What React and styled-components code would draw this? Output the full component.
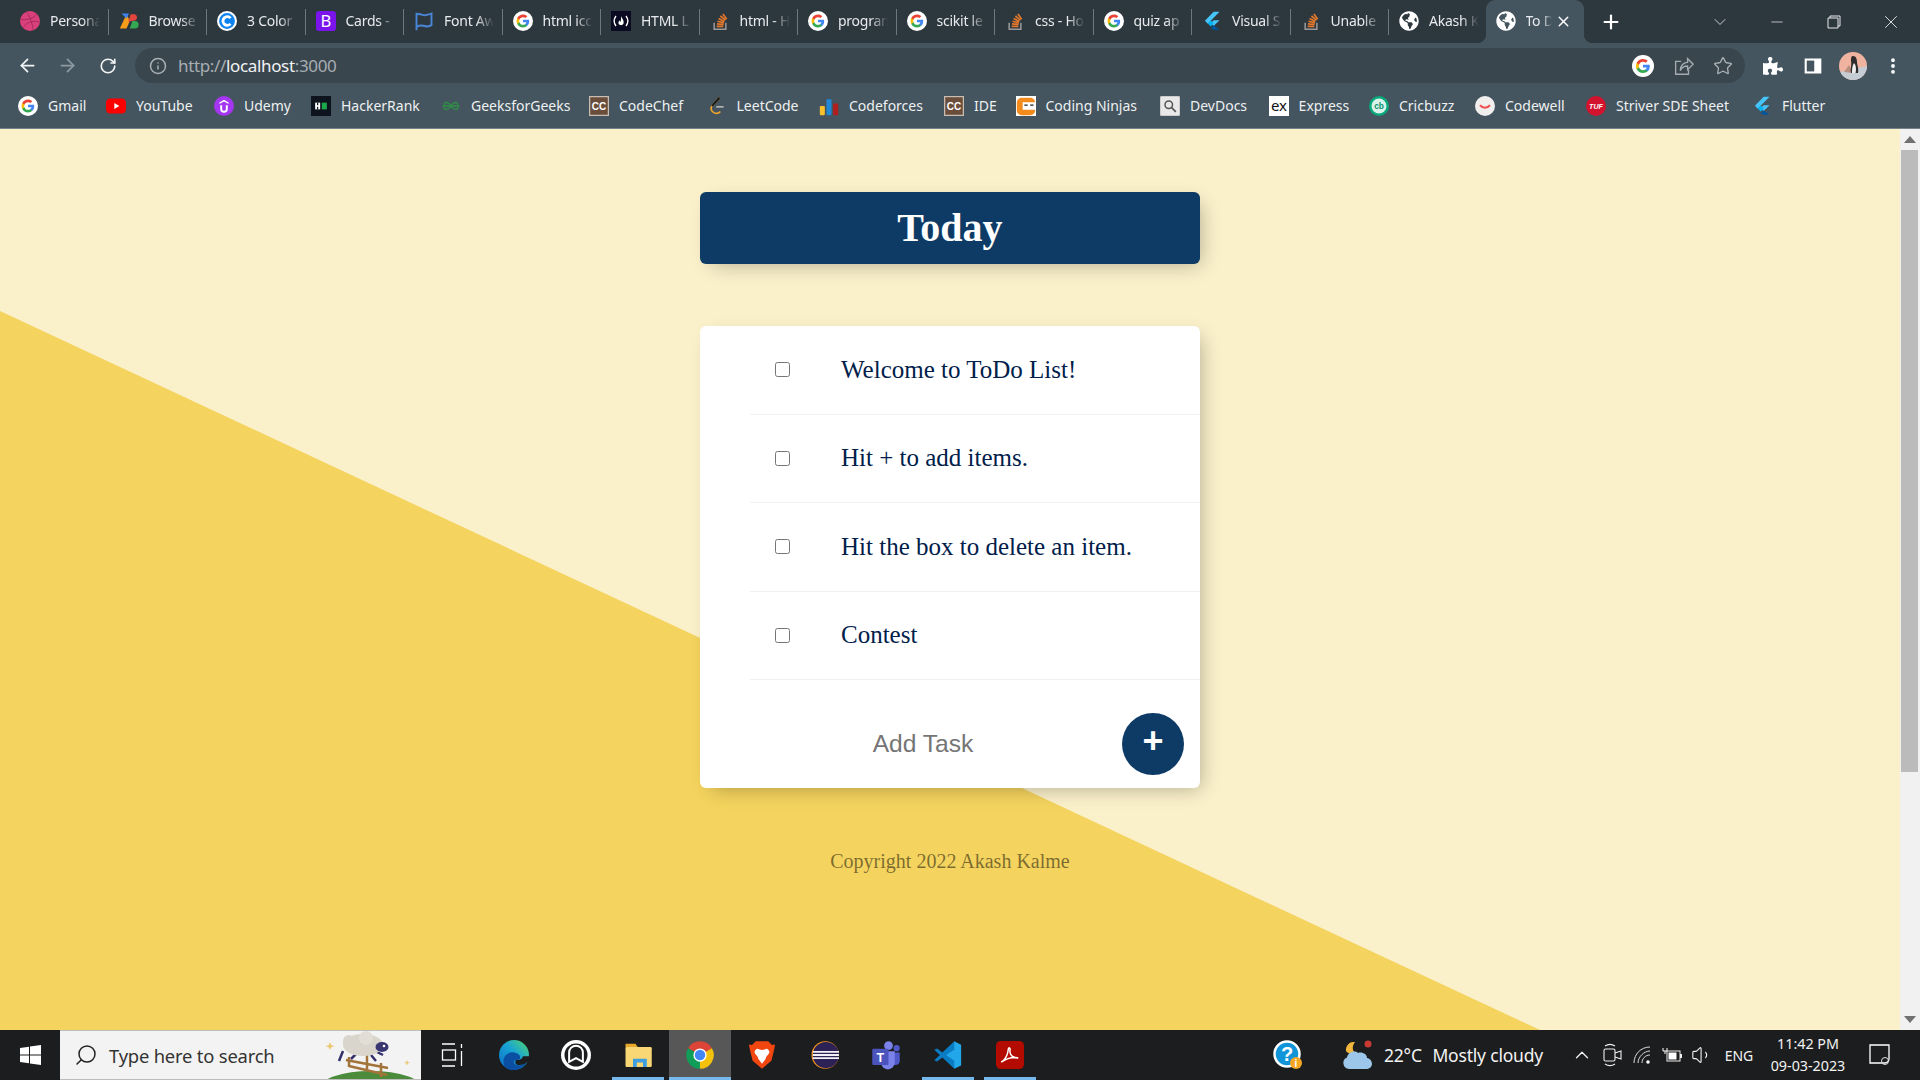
import React from "react";
import styled, { createGlobalStyle } from "styled-components";
import { ArrowLeft, ArrowRight, RotateCw, Info, Star, EllipsisVertical, X, Plus, ChevronDown, Minus, Search, ChevronUp, Volume1 } from "lucide-react";
import { FaPuzzlePiece, FaGlobeAmericas } from "react-icons/fa";

const UI = '"Noto Sans", "Open Sans", sans-serif';

const Global = createGlobalStyle`
  html, body { margin: 0; padding: 0; height: 100%; overflow: hidden; }
  * { box-sizing: border-box; }
  body { font-family: "Liberation Serif", serif; }
`;

const Shell = styled.div`
  width: 1920px; height: 1080px; display: flex; flex-direction: column; overflow: hidden;
`;

/* ---------- tab strip ---------- */
const TabStrip = styled.div`
  height: 43px; flex: none; background: #2d373e; display: flex; align-items: stretch; padding-left: 10px;
  font-family: ${UI}; color: #e8eaed;
`;
const Tab = styled.div`
  position: relative; flex: 0 0 98.5px; display: flex; align-items: center; gap: 10px; padding: 0 0 1px 10px;
  ${p => p.$active && `
    margin-left: -2px;
    background: #44555f; border-radius: 9px 9px 0 0;
    &::before, &::after { content: ""; position: absolute; bottom: 0; width: 9px; height: 9px; }
    &::before { left: -9px; background: radial-gradient(circle at 0 0, transparent 9px, #44555f 9.5px); }
    &::after { right: -9px; background: radial-gradient(circle at 100% 0, transparent 9px, #44555f 9.5px); }
  `}
  ${p => p.$sep && `
    &::after { content: ""; position: absolute; right: 0; top: 9px; height: 26px; width: 1px; background: #6d777d; }
  `}
`;
const TabTitle = styled.span`
  flex: none; width: ${p => p.$w || 50}px; overflow: hidden; white-space: nowrap; font-size: 14px; line-height: 20px; letter-spacing: -0.25px;
  -webkit-mask-image: linear-gradient(to right, #000 65%, transparent 100%);
  mask-image: linear-gradient(to right, #000 65%, transparent 100%);
`;
const TabClose = styled.span`
  position: absolute; right: 12px; top: 13px; display: flex;
`;
const NewTab = styled.div`
  flex: none; margin-left: 16px; width: 22px; display: flex; align-items: center; justify-content: center; color: #fff;
`;
const WindowControls = styled.div`
  margin-left: auto; display: flex; align-items: center; color: #e8eaed;
`;
const WinButton = styled.div`
  width: ${p => p.$w}px; display: flex; justify-content: center; align-items: center; height: 38px;
`;

/* ---------- toolbar ---------- */
const Toolbar = styled.div`
  height: 40px; flex: none; background: #44555f; display: flex; align-items: flex-end; font-family: ${UI};
`;
const NavGroup = styled.div`
  flex: none; width: 135px; height: 35px; display: flex; align-items: center; padding-left: 7px; gap: 0.5px;
`;
const NavButton = styled.div`
  width: 40px; height: 35px; display: flex; align-items: center; justify-content: center;
  color: ${p => (p.$dim ? "#8f9aa0" : "#f2f3f4")};
`;
const Omnibox = styled.div`
  flex: none; width: 1610px; height: 35px; background: #3a464e; border-radius: 18px; display: flex; align-items: center;
  padding-left: 14px; padding-right: 2px;
`;
const UrlIcon = styled.div`
  width: 29px; display: flex; color: #a9b0b5; flex: none;
`;
const Url = styled.div`
  font-size: 17px; color: #a7aeb3; letter-spacing: -0.35px; white-space: nowrap; flex: 1;
  strong { font-weight: 400; color: #f1f3f4; }
`;
const OmniAction = styled.div`
  width: 40px; display: flex; justify-content: center; color: #aab1b5;
`;
const ToolbarRight = styled.div`
  flex: 1; height: 35px; display: flex; align-items: center; padding-left: 8px; color: #fff;
`;
const ToolButton = styled.div`
  width: 40px; display: flex; justify-content: center; align-items: center;
`;

/* ---------- bookmarks ---------- */
const BookmarkBar = styled.div`
  height: 46px; flex: none; background: #44555f; border-bottom: 1px solid #76828a; display: flex; align-items: center;
  padding-left: 18px; font-family: ${UI}; color: #eef0f1; font-size: 14px;
`;
const Bookmark = styled.div`
  flex: 0 0 ${p => p.$w}px; display: flex; align-items: center; gap: 10px; white-space: nowrap;
`;

/* ---------- page ---------- */
const Viewport = styled.div`
  flex: 1; min-height: 0; display: flex;
`;
const Page = styled.main`
  position: relative; flex: 1; background: #faf0ca; overflow: hidden; display: flex; flex-direction: column; align-items: center;
  &::before {
    content: ""; position: absolute; inset: 0; background: #f4d35e;
    clip-path: polygon(0 182px, 1540px 901px, 0 901px);
  }
`;
const Heading = styled.header`
  position: relative; width: 500px; height: 72px; margin-top: 63px; background: #0d3b66; border-radius: 6px;
  box-shadow: 6px 6px 19px -6px rgba(0,0,0,.3); display: flex; align-items: center; justify-content: center;
`;
const Title = styled.h1`
  margin: 0; color: #fff; font-size: 40px; font-weight: 700; line-height: 46px;
`;
const Box = styled.section`
  position: relative; width: 500px; margin-top: 62px; background: #fff; border-radius: 6px;
  box-shadow: 6px 6px 19px -6px rgba(0,0,0,.3);
`;
const Item = styled.div`
  margin-left: 50px; min-height: 88.5px; display: flex; align-items: center; border-bottom: 1px solid #f1f1f1;
`;
const Check = styled.input`
  width: 15px; height: 15px; margin: 0 26px 0 25px; flex: none;
`;
const ItemText = styled.p`
  margin: 0; padding: 25px; font-size: 25px; font-weight: 400; color: #00204a;
`;
const AddForm = styled.form`
  margin-left: 50px; height: 108px; padding: 20px 16px 0 0; display: flex; align-items: center;
`;
const AddInput = styled.input`
  width: 346px; height: 62px; border: none; background: transparent; text-align: center; font-family: "Liberation Sans", Arial, sans-serif;
  font-size: 24.6px; outline: none; padding: 0;
  &::placeholder { color: #757575; opacity: 1; }
`;
const AddButton = styled.button`
  width: 62px; height: 62px; margin-left: 26px; flex: none; border: none; border-radius: 50%; background: #0d3b66; color: #fff;
  font-family: "Liberation Sans", Arial, sans-serif; font-size: 36px; font-weight: 700; padding: 0 0 7px; line-height: 1;
`;
const Footer = styled.footer`
  position: relative; margin-top: 61px; font-size: 20px; line-height: 24px; color: rgba(0,0,0,.5); text-align: center;
`;

const Scrollbar = styled.div`
  flex: 0 0 20px; background: #f1f1f1; display: flex; flex-direction: column; align-items: center; justify-content: space-between;
`;
const ScrollArrow = styled.div`
  height: 21px; flex: none; width: 100%; display: flex; align-items: center; justify-content: center; padding-right: 1px;
`;
const ScrollTrack = styled.div`
  flex: 1; width: 100%;
`;
const ScrollThumb = styled.div`
  height: 622px; background: #bbbbbb; margin-left: 1px; margin-right: 2px;
`;

/* ---------- taskbar ---------- */
const Taskbar = styled.footer`
  height: 50px; flex: none; background: #1c1d1e; display: flex; align-items: center; font-family: ${UI}; color: #f3f3f3;
`;
const StartButton = styled.div`
  flex: 0 0 60px; height: 100%; display: flex; align-items: center; justify-content: center;
`;
const SearchBox = styled.div`
  flex: 0 0 361px; height: 100%; background: #f3f3f3; border-top: 1px solid #bdbdbd; border-bottom: 1px solid #bdbdbd; display: flex; align-items: center;
  padding-left: 14px; color: #333; font-size: 18.4px; overflow: hidden;
`;
const SearchLabel = styled.span`
  margin-left: 11px; white-space: nowrap; letter-spacing: -0.2px;
`;
const Doodle = styled.svg`
  margin-left: auto; flex: none; display: block;
`;
const AppCell = styled.div`
  position: relative; flex: 0 0 62px; height: 100%; display: flex; align-items: center; justify-content: center;
  background: ${p => (p.$focused ? "#575757" : "transparent")};
  ${p => p.$open && `
    &::after { content: ""; position: absolute; bottom: 0; height: 3px; left: ${p.$focused ? 0 : 5}px; right: ${p.$focused ? 0 : 5}px; background: #76b9ed; }
  `}
`;
const Tray = styled.div`
  margin-left: auto; display: flex; align-items: center; height: 100%; padding-right: 15px;
`;
const TrayCell = styled.div`
  flex: 0 0 ${p => p.$w}px; margin-left: ${p => p.$ml || 0}px; display: flex; align-items: center; justify-content: center;
  font-size: ${p => p.$fs || 14}px; white-space: nowrap;
`;
const WeatherText = styled.span`
  flex: 0 0 159px; margin-left: 10px; font-size: 17.5px; white-space: nowrap; display: flex; justify-content: space-between; letter-spacing: -0.2px;
`;
const Clock = styled.div`
  flex: 0 0 94px; display: flex; flex-direction: column; align-items: center; font-size: 14.3px; line-height: 22px;
`;

/* ---------- drawn icons ---------- */
const Svg = ({ s = 20, v = 24, children }) => (
  <svg width={s} height={s} viewBox={`0 0 ${v} ${v}`} style={{ flex: "none", display: "block" }}>{children}</svg>
);
const GoogleMark = () => (
  <>
    <path fill="#4285F4" d="M22.56 12.25c0-.78-.07-1.53-.2-2.25H12v4.26h5.92c-.26 1.37-1.04 2.53-2.21 3.31v2.77h3.57c2.08-1.92 3.28-4.74 3.28-8.09z" />
    <path fill="#34A853" d="M12 23c2.97 0 5.46-.98 7.28-2.66l-3.57-2.77c-.98.66-2.23 1.06-3.71 1.06-2.86 0-5.29-1.93-6.16-4.53H2.18v2.84C3.99 20.53 7.7 23 12 23z" />
    <path fill="#FBBC05" d="M5.84 14.09c-.22-.66-.35-1.36-.35-2.09s.13-1.43.35-2.09V7.07H2.18C1.43 8.55 1 10.22 1 12s.43 3.45 1.18 4.93l2.85-2.22.81-.62z" />
    <path fill="#EA4335" d="M12 5.38c1.62 0 3.06.56 4.21 1.64l3.15-3.15C17.45 2.09 14.97 1 12 1 7.7 1 3.99 3.47 2.18 7.07l3.66 2.84c.87-2.6 3.3-4.53 6.16-4.53z" />
  </>
);
const Google = ({ s = 20 }) => (
  <Svg s={s}><circle cx="12" cy="12" r="12" fill="#fff" /><g transform="translate(3.6 3.6) scale(.7)"><GoogleMark /></g></Svg>
);
const Dribbble = () => (
  <Svg><circle cx="12" cy="12" r="12" fill="#d9407c" /><g fill="none" stroke="#a82d5f" strokeWidth="1.2"><path d="M8 1.5c3 4 6 10 8 21" /><path d="M1 10c6 1 14 0 19-6" /><path d="M4 20c3-6 10-9 19-7" /></g></Svg>
);
const Browse = () => (
  <Svg>
    <path fill="#f59c1a" d="M1 21 9 4l4 8-4 9z" /><path fill="#3f83f0" d="M3 3h9l-3 6z" />
    <path fill="#e2453c" d="M11 13l3-9h5a4 4 0 0 1 1 7z" /><path fill="#35a853" d="M13 21l3-9h3a4.5 4.5 0 0 1 0 9z" />
  </Svg>
);
const ThreeColor = () => (
  <Svg><circle cx="12" cy="12" r="12" fill="#fff" /><circle cx="12" cy="12" r="9.5" fill="#0d83f2" /><path d="M16.2 8.5a5.2 5.2 0 1 0 0 7" fill="none" stroke="#fff" strokeWidth="3.4" /></Svg>
);
const Bootstrap = () => (
  <Svg><rect width="24" height="24" rx="4" fill="#7a13ec" /><text x="12" y="19" textAnchor="middle" fontFamily="Noto Sans, sans-serif" fontSize="20" fill="#fff">B</text></Svg>
);
const FontAwesomeFlag = () => (
  <Svg><path d="M3 2v21M3 4c5-2 7 2 11 1s5-1 7-2v14c-3 2-5 2-8 1s-6-1-10 1" fill="none" stroke="#4a86d8" strokeWidth="2.3" /></Svg>
);
const FreeCodeCamp = () => (
  <Svg>
    <rect width="24" height="24" fill="#0a0a23" />
    <path d="M6 6c-3 4-3 8 0 12M18 6c3 4 3 8 0 12" fill="none" stroke="#fff" strokeWidth="1.6" />
    <path d="M12 6c1 3 4 5 3 9-.5 1.600-2 2-3 2s-2.500-.4-3-2c-.4-1.500.5-3 1.500-4 0 1.200.5 1.800 1 2 .5-2.300.8-4.700.5-7z" fill="#fff" />
  </Svg>
);
const StackOverflow = () => (
  <Svg>
    <path d="M5 14v8h14v-8" fill="none" stroke="#9a9a9a" strokeWidth="1.8" />
    <path d="M8 18.500h8M8.300 15.500l8 .7M9 12.300l7.700 2M10.300 9l7 3.500M12.500 6l6 5M15.500 3.500l4.500 6.500" stroke="#e3782b" strokeWidth="2" fill="none" />
  </Svg>
);
const Flutter = ({ s = 20 }) => (
  <Svg s={s}>
    <path fill="#47c5fb" d="M14 1h7L7 15.300 3.500 11.800z" /><path fill="#47c5fb" d="M14 11h7l-7 7-3.500-3.500z" />
    <path fill="#00569e" d="M10.500 21.500 14 18l7 5h-7z" transform="translate(0 -.5)" /><path fill="#00b5f8" d="M7 15l3.500-3.500L14 15l-3.500 3.500z" />
  </Svg>
);
const Globe = () => (
  <FaGlobeAmericas size={20} color="#fff" style={{ flex: "none", display: "block" }} />
);
const YouTube = () => (
  <Svg><rect x="0" y="3" width="24" height="18" rx="5" fill="#ff0000" /><path d="M10 8.500v7l6-3.500z" fill="#fff" /></Svg>
);
const Udemy = () => (
  <Svg><circle cx="12" cy="12" r="12" fill="#a435f0" /><path d="M7.500 11v4.500a4.500 4.500 0 0 0 9 0V11h-2.300v4.500a2.200 2.200 0 0 1-4.400 0V11z M12 4.500l5.500 3.200v2l-5.500-3.200-5.500 3.200v-2z" fill="#fff" /></Svg>
);
const HackerRank = () => (
  <Svg><rect width="24" height="24" fill="#0e141e" /><rect x="5" y="8" width="6" height="8" fill="#fff" /><rect x="7.200" y="8" width="1.500" height="3" fill="#0e141e" /><rect x="7.200" y="13" width="1.500" height="3" fill="#0e141e" /><rect x="13" y="8" width="6" height="8" fill="#1ba94c" /></Svg>
);
const Geeks = () => (
  <Svg><path d="M2 12h20M5 8c3-1 5 1 7 4s4 5 7 4c2-1 2-6 0-8-3-1-5 1-7 4s-4 5-7 4c-2-1-2-7 0-8z" fill="none" stroke="#2f8d46" strokeWidth="1.600" /></Svg>
);
const LetterTile = ({ bg = "#6a4d3b", ring = "#c9bcb0", children }) => (
  <Svg><rect width="24" height="24" fill={ring} /><rect x="1.500" y="1.500" width="21" height="21" fill={bg} />
    <text x="12" y="16.500" textAnchor="middle" fontFamily="Liberation Sans, sans-serif" fontWeight="700" fontSize="12" fill="#fff">{children}</text></Svg>
);
const LeetCode = () => (
  <Svg><path d="M15 2 6 12c-2.500 3-.5 7 3 8.500 3 1 5.500 0 7-2" fill="none" stroke="#f0a32c" strokeWidth="2" /><path d="M15 2 6 12" stroke="#111" strokeWidth="2.200" /><path d="M11 13h9" stroke="#b3b3b3" strokeWidth="2" /></Svg>
);
const Codeforces = () => (
  <Svg><rect x="1" y="12" width="6" height="11" rx="1" fill="#f7c02c" /><rect x="9" y="4" width="6" height="19" rx="1" fill="#1e88d6" /><rect x="17" y="9" width="6" height="14" rx="1" fill="#b31d1d" /></Svg>
);
const Ninjas = () => (
  <Svg><rect width="24" height="24" fill="#fff" /><rect x="1" y="2" width="22" height="21" rx="6" fill="#f28a1c" /><rect x="8" y="7.500" width="16" height="9" fill="#fff" /><rect x="10" y="10" width="4" height="2" fill="#555" /><rect x="17" y="10" width="4" height="2" fill="#555" /></Svg>
);
const DevDocs = () => (
  <Svg><rect width="24" height="24" rx="2" fill="#e8e8e8" stroke="#aaa" /><circle cx="10.500" cy="10.500" r="4.500" fill="none" stroke="#555" strokeWidth="1.800" /><path d="M14 14l5 5" stroke="#555" strokeWidth="2" /></Svg>
);
const Express = () => (
  <Svg><rect width="24" height="24" fill="#fff" /><text x="12" y="18" textAnchor="middle" fontFamily="Noto Sans, sans-serif" fontSize="18" fill="#111">ex</text></Svg>
);
const Cricbuzz = () => (
  <Svg><circle cx="12" cy="12" r="12" fill="#09a77c" /><circle cx="12" cy="12" r="9" fill="#d9f3ea" /><text x="12" y="16" textAnchor="middle" fontFamily="Liberation Sans, sans-serif" fontWeight="700" fontSize="10" fill="#09916b">cb</text></Svg>
);
const Codewell = () => (
  <Svg><circle cx="12" cy="12" r="12" fill="#f1eeee" /><path d="M6 11c3 4 9 4 12 0" fill="none" stroke="#ef4f4f" strokeWidth="2.500" /></Svg>
);
const Striver = () => (
  <Svg><circle cx="12" cy="12" r="12" fill="#d3132e" /><text x="12" y="15.500" textAnchor="middle" fontFamily="Liberation Sans, sans-serif" fontWeight="700" fontStyle="italic" fontSize="8.500" fill="#fff">TUF</text></Svg>
);
const Share = () => (
  <Svg s={22}><path d="M10 7H4v14h14v-5M9 17c0-6 4-9 8-9V4l6 6-6 6v-4c-4 0-6 1-8 5z" fill="none" stroke="#a3abb0" strokeWidth="1.500" /></Svg>
);
const SidePanel = () => (
  <Svg s={20}><rect x="2" y="3" width="20" height="18" fill="#fff" /><rect x="4.500" y="5.500" width="9" height="13" fill="#44555f" /></Svg>
);
const Avatar = () => (
  <svg width="28" height="28" viewBox="0 0 28 28" style={{ display: "block", flex: "none" }}>
    <defs><clipPath id="av"><circle cx="14" cy="14" r="14" /></clipPath></defs>
    <g clipPath="url(#av)">
      <rect width="28" height="28" fill="#f0b3a0" /><path d="M0 20 28 14V28H0z" fill="#c6ccd4" /><path d="M5 20l5-7 4 8z" fill="#b98f80" />
      <path d="M14 4c3 0 4 3 4 6s2 6 1 11h-7c-1-5 1-8 0-12 0-3 0-5 2-5z" fill="#2d2d2d" /><path d="M15 11c2 2 2.500 6 1.500 10H13c0-4 0-7 2-10z" fill="#eee" />
    </g>
  </svg>
);
const Restore = () => (
  <svg width="14" height="14" viewBox="0 0 14 14" style={{ display: "block" }}><path d="M3 3V1h10v10h-2M1 3h10v10H1z" fill="none" stroke="#e8eaed" strokeWidth="1" /></svg>
);
const WindowsLogo = () => (
  <svg width="21" height="20" viewBox="0 0 21 20" style={{ display: "block" }}><path fill="#fff" d="M0 3l9-1.300V9.500H0zM10 1.500 21 0v9.500H10zM0 10.500h9v7.800L0 17zM10 10.500h11V20l-11-1.500z" /></svg>
);
const TaskView = () => (
  <svg width="22" height="24" viewBox="0 0 22 24" style={{ display: "block" }}><g fill="none" stroke="#fff" strokeWidth="1.300"><path d="M1 1h13M1 23h13" /><rect x="1.500" y="7" width="13" height="10" /><path d="M20.500 1v4M20.500 8v15" /></g></svg>
);
const Edge = () => (
  <Svg s={30}>
    <defs><linearGradient id="edgeA" x1="0" y1="1" x2="1" y2="0"><stop offset="0" stopColor="#0a6fc9" /><stop offset=".55" stopColor="#19a3d4" /><stop offset="1" stopColor="#54d96a" /></linearGradient></defs>
    <circle cx="12" cy="12" r="12" fill="url(#edgeA)" />
    <path d="M5 22C1 15 6 9 12 10c3 .5 5 2 5 4 0 1-1 2-3 2-2 0-3 2-1 3.500 2 1.200 6 1 9-2C20 22 15 24 12 24 9 24 7 23.500 5 22z" fill="#0b4fa3" />
    <path d="M14 16c3 0 5-1 5-3h5v3.500c-3 3-7 4.200-10 3-1.500-1-1-3.500 0-3.500z" fill="#1c1d1e" />
  </Svg>
);
const ArchBadge = () => (
  <Svg s={30}><circle cx="12" cy="12" r="12" fill="#fff" /><circle cx="12" cy="12" r="9.200" fill="#1c1d1e" /><path d="M6.500 17.500V10a5.500 5.500 0 0 1 11 0v7.500L12 14.500z" fill="none" stroke="#fff" strokeWidth="1.600" /></Svg>
);
const Folder = () => (
  <Svg s={30}><path d="M2 3h8l2 3H2z" fill="#e6a82a" /><rect x="2" y="5.500" width="21" height="16" rx="1" fill="#f9d775" /><path d="M8 21.500V15h11v6.500h-3V18h-5v3.500z" fill="#3d9ee0" /></Svg>
);
const Chrome = () => (
  <Svg s={30}>
    <path d="M12 12 2.470 6.500A11 11 0 0 1 21.530 6.500z" fill="#db4437" /><path d="M12 12 21.530 6.500A11 11 0 0 1 12 23z" fill="#f4c20d" /><path d="M12 12 12 23A11 11 0 0 1 2.470 6.500z" fill="#0f9d58" />
    <circle cx="12" cy="12" r="5.300" fill="#fff" /><circle cx="12" cy="12" r="4.200" fill="#4285f4" />
  </Svg>
);
const Brave = () => (
  <Svg s={30}><path d="M7 1h10l3 3 2.500-.5-1 5-2 8L12 23l-7.500-6.500-2-8-1-5L4 4z" fill="#f1460f" /><path d="M12 8c-1.500 0-2.500-1-4-1 0 0-2 1-2 3 1 2 3 3 3 5l3 4 3-4c0-2 2-3 3-5 0-2-2-3-2-3-1.500 0-2.500 1-4 1z" fill="#fff" /></Svg>
);
const Eclipse = () => (
  <Svg s={30}><circle cx="13" cy="12" r="11" fill="#f7941e" /><circle cx="13.500" cy="12" r="10.500" fill="#2c2255" /><path d="M3 9.500h21M3 12h21M3 14.500h21" stroke="#f3f1f7" strokeWidth="1.500" /></Svg>
);
const Teams = () => (
  <Svg s={30}><circle cx="14" cy="4.500" r="3.500" fill="#7b83eb" /><circle cx="20.500" cy="6.500" r="2.500" fill="#5059c9" /><path d="M17 10h6v7a3.500 3.500 0 0 1-6 2z" fill="#5059c9" /><path d="M8 9h11v9a5.500 5.500 0 0 1-11 0z" fill="#7b83eb" /><rect x="1" y="7" width="13" height="13" rx="1" fill="#4b53bc" /><text x="7.500" y="17.500" textAnchor="middle" fontFamily="Liberation Sans, sans-serif" fontWeight="700" fontSize="10" fill="#fff">T</text></Svg>
);
const VSCode = () => (
  <Svg s={30}><path fill="#0a7cc4" d="M17 1 7.500 10 3.300 6.800 1 7.800 5.500 12 1 16.200 3.300 17.200 7.500 14 17 23l2-5-7-6 7-6z" /><path fill="#22a7ea" d="M17 1l5.500 2.700v16.600L17 23V16.500L10.500 12 17 7.500z" /></Svg>
);
const Acrobat = () => (
  <Svg s={28}><rect x="0" y="0" width="24" height="24" rx="4" fill="#b30b00" /><path d="M4.500 18c3-1 5.500-6 6-10.500.2-2.500 2-2 1.500.5-.5 3 2 7 7 6.500-4-1-9 0-14.500 3.500z" fill="none" stroke="#fff" strokeWidth="1.300" /></Svg>
);
const HelpBadge = () => (
  <svg width="30" height="30" viewBox="0 0 30 30" style={{ display: "block" }}>
    <circle cx="14" cy="14" r="12.500" fill="#1295d8" stroke="#fff" strokeWidth="2.500" />
    <text x="14" y="21" textAnchor="middle" fontFamily="Liberation Sans, sans-serif" fontWeight="700" fontSize="20" fill="#fff">?</text>
    <circle cx="23" cy="23" r="6" fill="#f5a623" /><text x="23" y="27" textAnchor="middle" fontFamily="Liberation Sans, sans-serif" fontWeight="700" fontSize="10" fill="#fff">i</text>
  </svg>
);
const Weather = () => (
  <svg width="32" height="32" viewBox="0 0 32 32" style={{ display: "block" }}>
    <path d="M13 3a8 8 0 0 0-9 9c2 3 6 3 9 2-3-3-3-7 0-11z" fill="#f2b63c" /><circle cx="26" cy="5" r="3.500" fill="#c83a32" />
    <path d="M7 30a6 6 0 0 1-2-11.500C6 13 13 11 16 14c4-1.500 9 1 9 5 3 .5 5 3 5 6 0 3-3 5-6 5z" fill="#9cc6ea" />
  </svg>
);
const Meet = () => (
  <svg width="20" height="24" viewBox="0 0 20 24" style={{ display: "block" }}><g fill="none" stroke="#eee" strokeWidth="1.100"><rect x="1" y="6" width="11" height="12" rx="1.500" /><path d="M12 10l6-2v8l-6-2M2 3c3-2 7-2 10 0M2 21c3 2 7 2 10 0" /></g></svg>
);
const Wifi = () => (
  <svg width="20" height="20" viewBox="0 0 20 20" style={{ display: "block" }}><g fill="none" stroke="#ddd" strokeWidth="1"><path d="M1 18C1 9 8 2 17 2M5 18c0-6 6-12 12-12M9 18c0-4 3-8 8-8" /></g><circle cx="15" cy="17" r="1.800" fill="#fff" /></svg>
);
const Battery = () => (
  <svg width="20" height="16" viewBox="0 0 20 16" style={{ display: "block" }}><path d="M1 1v3h4V1M3 4v3" stroke="#fff" fill="none" /><rect x="5" y="4" width="13" height="10" fill="none" stroke="#eee" /><rect x="6.500" y="5.500" width="8" height="7" fill="#fff" /><rect x="18" y="7" width="2" height="4" fill="#eee" /></svg>
);
const Notify = () => (
  <svg width="22" height="24" viewBox="0 0 22 24" style={{ display: "block" }}><path d="M1 2h19v14c0 2-2 4-4 4H1z" fill="none" stroke="#fff" strokeWidth="1.300" /><circle cx="16" cy="18" r="3.500" fill="none" stroke="#ddd" /></svg>
);
const SheepDoodle = () => (
  <Doodle width="100" height="48" viewBox="0 0 100 48">
    <ellipse cx="50" cy="58" rx="52" ry="18" fill="#4b8b3b" />
    <path d="M28 26v10M46 24v14M60 32v14M25 29l42 8M28 35l38 9" stroke="#a3743a" strokeWidth="2.500" fill="none" />
    <path d="M22 20l-4 10M36 22l-6 6M50 24l5 6M54 20l8 4" stroke="#34306b" strokeWidth="2.500" />
    <ellipse cx="42" cy="14" rx="20" ry="11" fill="#d9d5cd" /><circle cx="28" cy="10" r="6" fill="#d9d5cd" /><circle cx="45" cy="7" r="7" fill="#e2ded6" />
    <ellipse cx="61" cy="16" rx="6.500" ry="5" fill="#3a3672" /><circle cx="63" cy="15" r="1.300" fill="#fff" />
    <path d="M80 3a9 9 0 1 1 0 25 12 12 0 0 0 0-25z" fill="#e8c66f" />
    <path d="M9 11l1.200 3 3 1.200-3 1.200L9 19l-1.200-2.600-3-1.200 3-1.200zM86 29l.8 2 2 .8-2 .8-.8 2-.8-2-2-.8 2-.8z" fill="#e9c973" />
  </Doodle>
);

const tabs = [
  [Dribbble, "Personal"], [Browse, "Browse"], [ThreeColor, "3 Color"], [Bootstrap, "Cards -"], [FontAwesomeFlag, "Font Aw"],
  [Google, "html icc"], [FreeCodeCamp, "HTML L"], [StackOverflow, "html - H"], [Google, "program"], [Google, "scikit le"],
  [StackOverflow, "css - Ho"], [Google, "quiz ap"], [Flutter, "Visual S"], [StackOverflow, "Unable"], [Globe, "Akash K"],
];

const bookmarks = [
  [Google, "Gmail", 88], [YouTube, "YouTube", 108], [Udemy, "Udemy", 97], [HackerRank, "HackerRank", 130], [Geeks, "GeeksforGeeks", 148],
  [() => <LetterTile>CC</LetterTile>, "CodeChef", 117.5], [LeetCode, "LeetCode", 112.5], [Codeforces, "Codeforces", 125],
  [() => <LetterTile>CC</LetterTile>, "IDE", 71.5], [Ninjas, "Coding Ninjas", 144.5], [DevDocs, "DevDocs", 108.6], [Express, "Express", 100.4],
  [Cricbuzz, "Cricbuzz", 106], [Codewell, "Codewell", 111], [Striver, "Striver SDE Sheet", 166], [Flutter, "Flutter", 80],
];

const todos = ["Welcome to ToDo List!", "Hit + to add items.", "Hit the box to delete an item.", "Contest"];

const apps = [
  { I: TaskView }, { I: Edge }, { I: ArchBadge }, { I: Folder, open: true }, { I: Chrome, open: true, focused: true },
  { I: Brave }, { I: Eclipse }, { I: Teams }, { I: VSCode, open: true }, { I: Acrobat, open: true },
];

export default function App() {
  return (
    <Shell>
      <Global />
      <TabStrip>
        {tabs.map(([I, t], i) => (
          <Tab key={i} $sep={i < 14}><I /><TabTitle>{t}</TabTitle></Tab>
        ))}
        <Tab $active><Globe /><TabTitle $w={26}>To Do</TabTitle><TabClose><X size={17} color="#fff" strokeWidth={2} /></TabClose></Tab>
        <NewTab><Plus size={22} strokeWidth={2.4} /></NewTab>
        <WindowControls>
          <WinButton $w={57}><ChevronDown size={20} strokeWidth={1} /></WinButton>
          <WinButton $w={57}><Minus size={18} strokeWidth={1} /></WinButton>
          <WinButton $w={57}><Restore /></WinButton>
          <WinButton $w={58}><X size={22} strokeWidth={1} /></WinButton>
        </WindowControls>
      </TabStrip>

      <Toolbar>
        <NavGroup>
          <NavButton><ArrowLeft size={21} strokeWidth={2} /></NavButton>
          <NavButton $dim><ArrowRight size={21} strokeWidth={2} /></NavButton>
          <NavButton><RotateCw size={18} strokeWidth={2.2} /></NavButton>
        </NavGroup>
        <Omnibox>
          <UrlIcon><Info size={18} strokeWidth={2} /></UrlIcon>
          <Url>http://<strong>localhost</strong>:3000</Url>
          <OmniAction><Google s={22} /></OmniAction>
          <OmniAction><Share /></OmniAction>
          <OmniAction><Star size={20} strokeWidth={1.6} /></OmniAction>
        </Omnibox>
        <ToolbarRight>
          <ToolButton><FaPuzzlePiece size={20} /></ToolButton>
          <ToolButton><SidePanel /></ToolButton>
          <ToolButton><Avatar /></ToolButton>
          <ToolButton><EllipsisVertical size={20} strokeWidth={2.6} /></ToolButton>
        </ToolbarRight>
      </Toolbar>

      <BookmarkBar>
        {bookmarks.map(([I, t, w]) => (
          <Bookmark key={t} $w={w}><I />{t}</Bookmark>
        ))}
      </BookmarkBar>

      <Viewport>
        <Page>
          <Heading><Title>Today</Title></Heading>
          <Box>
            {todos.map(t => (
              <Item key={t}><Check type="checkbox" /><ItemText>{t}</ItemText></Item>
            ))}
            <AddForm onSubmit={e => e.preventDefault()}>
              <AddInput placeholder="Add Task" />
              <AddButton type="submit">+</AddButton>
            </AddForm>
          </Box>
          <Footer>Copyright 2022 Akash Kalme</Footer>
        </Page>
        <Scrollbar>
          <ScrollArrow><svg width="12" height="7"><path d="M6 0l6 7H0z" fill="#707070" /></svg></ScrollArrow>
          <ScrollTrack><ScrollThumb /></ScrollTrack>
          <ScrollArrow><svg width="12" height="7"><path d="M6 7l6-7H0z" fill="#707070" /></svg></ScrollArrow>
        </Scrollbar>
      </Viewport>

      <Taskbar>
        <StartButton><WindowsLogo /></StartButton>
        <SearchBox>
          <Search size={24} strokeWidth={1.5} color="#222" style={{ transform: "scaleX(-1)" }} />
          <SearchLabel>Type here to search</SearchLabel>
          <SheepDoodle />
        </SearchBox>
        {apps.map(({ I, open, focused }, i) => (
          <AppCell key={i} $open={open} $focused={focused}><I /></AppCell>
        ))}
        <Tray>
          <TrayCell $w={60}><HelpBadge /></TrayCell>
          <TrayCell $w={32} $ml={24}><Weather /></TrayCell>
          <WeatherText><span>22°C</span><span>Mostly cloudy</span></WeatherText>
          <TrayCell $w={30} $ml={24}><ChevronUp size={22} strokeWidth={1.4} /></TrayCell>
          <TrayCell $w={32}><Meet /></TrayCell>
          <TrayCell $w={28}><Wifi /></TrayCell>
          <TrayCell $w={30}><Battery /></TrayCell>
          <TrayCell $w={30}><Volume1 size={22} strokeWidth={1.2} /></TrayCell>
          <TrayCell $w={44} $fs={14}>ENG</TrayCell>
          <Clock><span>11:42 PM</span><span>09-03-2023</span></Clock>
          <TrayCell $w={50}><Notify /></TrayCell>
        </Tray>
      </Taskbar>
    </Shell>
  );
}
